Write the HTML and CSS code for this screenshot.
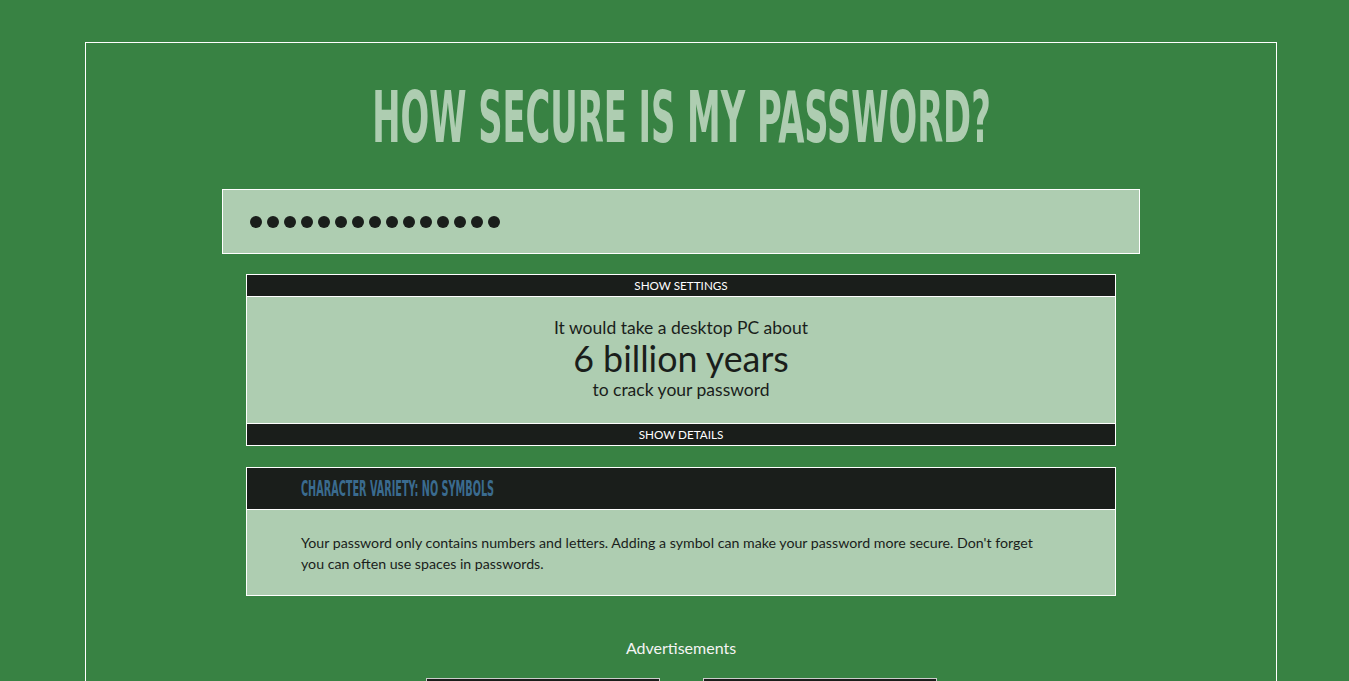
FILE: index.html
```html
<!DOCTYPE html>
<html lang="en">
<head>
<meta charset="utf-8">
<title>How Secure Is My Password?</title>
<link rel="stylesheet" href="styles.css">
</head>
<body>
<div class="frame">
  <h1 class="title"><span class="title-text">HOW SECURE IS MY PASSWORD?</span></h1>

  <div class="pw-box">
    <div class="dots">
      <span class="dot"></span><span class="dot"></span><span class="dot"></span><span class="dot"></span><span class="dot"></span>
      <span class="dot"></span><span class="dot"></span><span class="dot"></span><span class="dot"></span><span class="dot"></span>
      <span class="dot"></span><span class="dot"></span><span class="dot"></span><span class="dot"></span><span class="dot"></span>
    </div>
  </div>

  <div class="panel result">
    <div class="bar">SHOW SETTINGS</div>
    <div class="result-body">
      <div class="r-line">It would take a desktop PC about</div>
      <div class="r-big">6 billion years</div>
      <div class="r-line">to crack your password</div>
    </div>
    <div class="bar">SHOW DETAILS</div>
  </div>

  <div class="panel tip">
    <div class="tip-head"><span class="tip-title">CHARACTER VARIETY: NO SYMBOLS</span></div>
    <div class="tip-body">Your password only contains numbers and letters. Adding a symbol can make your password more secure. Don't forget you can often use spaces in passwords.</div>
  </div>

  <div class="ads">
    <div class="ads-label">Advertisements</div>
    <div class="ads-row">
      <div class="ad"></div>
      <div class="ad"></div>
    </div>
  </div>
</div>
</body>
</html>
```

FILE: styles.css
```css
html, body {
  margin: 0;
  padding: 0;
}
body {
  background: #388243;
  font-family: Lato, "Open Sans", sans-serif;
  color: #1a1e1b;
  overflow: hidden;
}
.frame {
  box-sizing: border-box;
  width: 1192px;
  margin: 42px 0 0 85px;
  border: 1px solid #ffffff;
  border-bottom: none;
  min-height: 700px;
  display: flex;
  flex-direction: column;
  align-items: center;
}
.frame > * {
  flex-shrink: 0;
}
.title {
  margin: 36px 0 0 0;
  height: 76px;
  line-height: 76px;
  font-family: "DejaVu Sans Condensed", "Liberation Sans Narrow", sans-serif;
  font-weight: 700;
  font-size: 72px;
  color: #aecdb1;
  text-align: center;
  white-space: nowrap;
  width: 100%;
}
.title-text {
  display: inline-block;
  transform: translateX(1px) scaleX(0.521);
}
.pw-box {
  box-sizing: border-box;
  margin-top: 34px;
  width: 918px;
  height: 65px;
  background: #aecdb1;
  border: 1px solid #ffffff;
  display: flex;
  align-items: center;
  padding-left: 27px;
}
.dots {
  display: flex;
  gap: 5px;
}
.dot {
  width: 12px;
  height: 12px;
  border-radius: 50%;
  background: #1a1e1b;
}
.panel {
  box-sizing: border-box;
  width: 870px;
  border: 1px solid #ffffff;
  display: flex;
  flex-direction: column;
}
.result {
  margin-top: 20px;
}
.bar {
  height: 21px;
  line-height: 21px;
  background: #1a1e1b;
  color: #ffffff;
  font-size: 11.7px;
  text-align: center;
}
.result-body {
  background: #aecdb1;
  border-top: 1px solid #ffffff;
  border-bottom: 1px solid #ffffff;
  padding: 20px 0 22px;
  text-align: center;
}
.r-line {
  font-size: 17.5px;
  line-height: 22px;
}
.r-big {
  font-size: 35.8px;
  line-height: 40px;
}
.tip {
  margin-top: 21px;
}
.tip-head {
  height: 41px;
  background: #1a1e1b;
  border-bottom: 1px solid #ffffff;
  display: flex;
  align-items: center;
  padding-left: 54px;
}
.tip-title {
  font-family: "DejaVu Sans Condensed", "Liberation Sans Narrow", sans-serif;
  font-weight: 700;
  font-size: 22px;
  color: #3a6b8f;
  display: inline-block;
  white-space: nowrap;
  transform: scaleX(0.49);
  transform-origin: left center;
}
.tip-body {
  background: #aecdb1;
  padding: 22px 66px 21px 54px;
  font-size: 14.2px;
  line-height: 21px;
}
.ads {
  margin-top: 41px;
  display: flex;
  flex-direction: column;
  align-items: center;
}
.ads-label {
  color: #f4f4f4;
  font-size: 16px;
  line-height: 22px;
}
.ads-row {
  margin-top: 19px;
  display: flex;
  gap: 43px;
}
.ad {
  box-sizing: border-box;
  width: 234px;
  height: 200px;
  background: #1a1e1b;
  border: 1px solid #cccccc;
}
```
